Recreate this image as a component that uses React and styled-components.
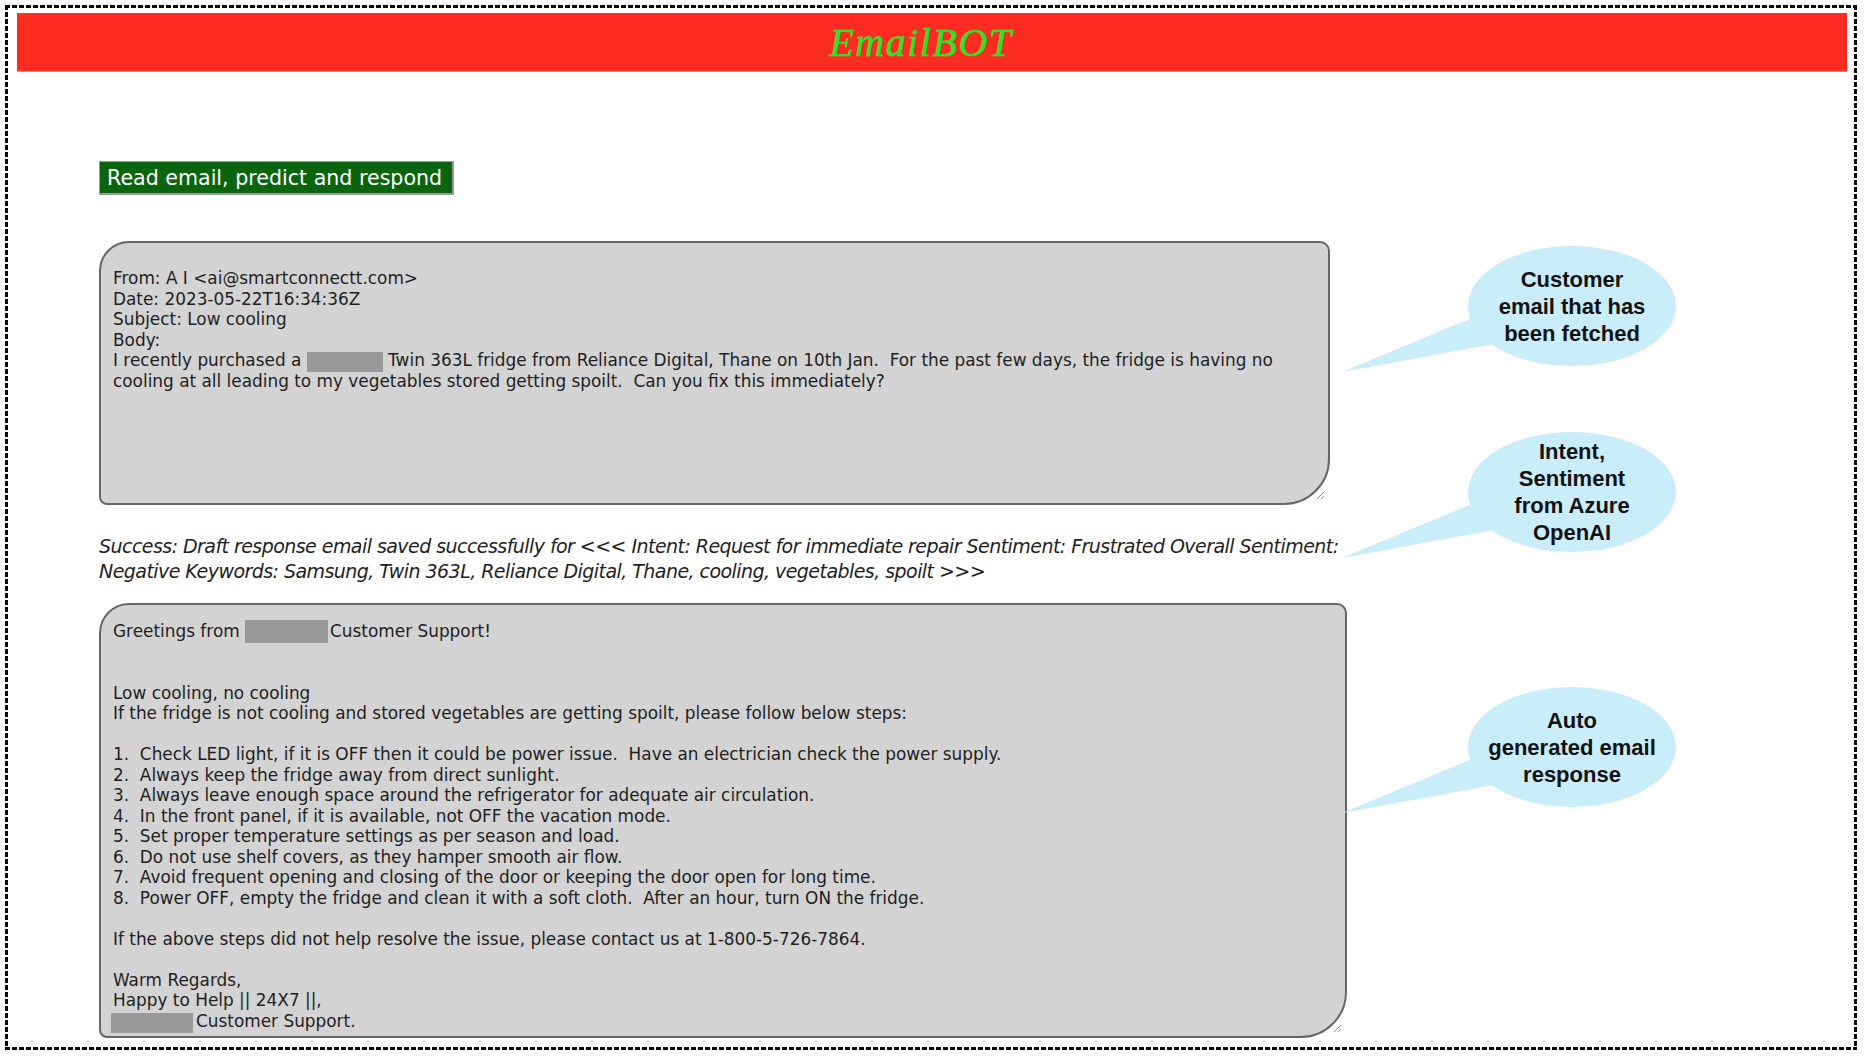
import React from 'react';
import styled, { createGlobalStyle } from 'styled-components';

const GlobalStyle = createGlobalStyle`
  html, body {
    margin: 0;
    padding: 0;
    background: #ffffff;
  }
  body {
    font-family: "DejaVu Sans", Tahoma, sans-serif;
    color: #1e1e1e;
  }
`;

// dashed page frame, drawn with gradients so the dashes stay short
const dash = (dir) => `repeating-linear-gradient(${dir}, #000 0 5px, transparent 5px 7px)`;

const Frame = styled.div`
  margin: 5px;
  width: 1852px;
  height: 1045px;
  box-sizing: border-box;
  padding: 3px;
  background:
    ${dash('90deg')} top left / 100% 3px no-repeat,
    ${dash('90deg')} bottom left / 100% 3px no-repeat,
    ${dash('180deg')} top left / 3px 100% no-repeat,
    ${dash('180deg')} top right / 3px 100% no-repeat;
`;

const Header = styled.header`
  margin: 5px 7px 0 9px;
  height: 58px;
  padding-right: 22px;
  background: #fe2b20;
  border-bottom: 1px solid #ff9089;
  display: flex;
  align-items: center;
  justify-content: center;
`;

const Title = styled.h1`
  margin: 0;
  font-family: "Liberation Serif", serif;
  font-style: italic;
  font-weight: normal;
  font-size: 40px;
  letter-spacing: 1.5px;
  color: #2de22d;
  -webkit-text-stroke: 0.6px #2de22d;
`;

const Main = styled.main`
  padding-left: 91px;
`;

const ActionButton = styled.button`
  display: block;
  margin-top: 89px;
  width: 355px;
  height: 34px;
  box-sizing: border-box;
  padding: 0 0 0 7px;
  text-align: left;
  background: #0b650f;
  color: #ffffff;
  font-family: "DejaVu Sans", Tahoma, sans-serif;
  font-size: 20.6px;
  border: 1px solid #9a9a9a;
  border-right-width: 2px;
  border-bottom-width: 2px;
  cursor: pointer;
`;

const Workspace = styled.div`
  display: flex;
  margin-top: 46px;
`;

const MailColumn = styled.div`
  width: 1248px;
  display: flex;
  flex-direction: column;
  align-items: flex-start;
`;

const MailBox = styled.div`
  position: relative;
  box-sizing: border-box;
  width: ${p => p.$w}px;
  height: ${p => p.$h}px;
  padding: ${p => p.$pt}px 12px 0 12px;
  background: #d3d3d3;
  border: 2px solid #666666;
  border-radius: 30px 10px 46px 8px;
  font-size: 16.9px;
  line-height: 20.5px;
  color: #1e1e1e;
  white-space: pre-wrap;
`;

const Line = styled.div`
  min-height: 20.5px;
`;

const Redacted = styled.span`
  display: inline-block;
  width: ${p => p.$w}px;
  height: ${p => p.$h}px;
  margin: -2px ${p => p.$after || 0}px -6px ${p => p.$before || 0}px;
  background: #9a9a9a;
`;

const ResizeGrip = styled.svg`
  position: absolute;
  right: 3px;
  bottom: 3px;
`;

const StatusText = styled.p`
  margin: 29px 0 20px;
  width: 1248px;
  font-style: italic;
  font-size: 19px;
  letter-spacing: -0.55px;
  line-height: 24.5px;
  color: #1e1e1e;
`;

const CalloutColumn = styled.aside`
  display: flex;
  flex-direction: column;
  margin-left: -5px;
`;

const Callout = styled.div`
  position: relative;
  width: 334px;
  height: 126px;
  margin-top: ${p => p.$mt}px;
  display: flex;
  justify-content: flex-end;
`;

const Bubble = styled.div`
  position: relative;
  z-index: 1;
  width: 208px;
  height: 120px;
  border-radius: 50%;
  background: #c9edfb;
  display: flex;
  align-items: center;
  justify-content: center;
  text-align: center;
  font-family: "Liberation Sans", Arial, sans-serif;
  font-weight: bold;
  font-size: 22px;
  line-height: 27px;
  color: #111111;
`;

const Tail = styled.svg`
  position: absolute;
  left: 0;
  top: 0;
`;

function Grip() {
  return (
    <ResizeGrip width="10" height="10" viewBox="0 0 10 10">
      <path d="M9 2 L2 9 M9 6 L6 9" stroke="#8a8a8a" strokeWidth="1" fill="none" />
    </ResizeGrip>
  );
}

function Note({ mt, children }) {
  return (
    <Callout $mt={mt}>
      <Tail width="160" height="126" viewBox="0 0 160 126">
        <polygon points="0,126 130,72 152,98" fill="#c9edfb" />
      </Tail>
      <Bubble>
        <div>{children}</div>
      </Bubble>
    </Callout>
  );
}

const steps = [
  '1.  Check LED light, if it is OFF then it could be power issue.  Have an electrician check the power supply.',
  '2.  Always keep the fridge away from direct sunlight.',
  '3.  Always leave enough space around the refrigerator for adequate air circulation.',
  '4.  In the front panel, if it is available, not OFF the vacation mode.',
  '5.  Set proper temperature settings as per season and load.',
  '6.  Do not use shelf covers, as they hamper smooth air flow.',
  '7.  Avoid frequent opening and closing of the door or keeping the door open for long time.',
  '8.  Power OFF, empty the fridge and clean it with a soft cloth.  After an hour, turn ON the fridge.',
];

export default function App() {
  return (
    <>
      <GlobalStyle />
      <Frame>
        <Header>
          <Title>EmailBOT</Title>
        </Header>
        <Main>
          <ActionButton>Read email, predict and respond</ActionButton>
          <Workspace>
            <MailColumn>
              <MailBox $w={1231} $h={264} $pt={25}>
                <Line>From: A I &lt;ai@smartconnectt.com&gt;</Line>
                <Line>Date: 2023-05-22T16:34:36Z</Line>
                <Line>Subject: Low cooling</Line>
                <Line>Body:</Line>
                <Line>
                  {'I recently purchased a '}
                  <Redacted $w={76} $h={20} />
                  {' Twin 363L fridge from Reliance Digital, Thane on 10th Jan.  For the past few days, the fridge is having no cooling at all leading to my vegetables stored getting spoilt.  Can you fix this immediately?'}
                </Line>
                <Grip />
              </MailBox>

              <StatusText>
                Success: Draft response email saved successfully for &lt;&lt;&lt; Intent: Request for immediate repair Sentiment: Frustrated Overall Sentiment: Negative Keywords: Samsung, Twin 363L, Reliance Digital, Thane, cooling, vegetables, spoilt &gt;&gt;&gt;
              </StatusText>

              <MailBox $w={1248} $h={435} $pt={16}>
                <Line>
                  {'Greetings from '}
                  <Redacted $w={83} $h={23} $after={2} />
                  {'Customer Support!'}
                </Line>
                <Line />
                <Line />
                <Line>Low cooling, no cooling</Line>
                <Line>If the fridge is not cooling and stored vegetables are getting spoilt, please follow below steps:</Line>
                <Line />
                {steps.map(s => (
                  <Line key={s}>{s}</Line>
                ))}
                <Line />
                <Line>If the above steps did not help resolve the issue, please contact us at 1-800-5-726-7864.</Line>
                <Line />
                <Line>Warm Regards,</Line>
                <Line>Happy to Help || 24X7 ||,</Line>
                <Line>
                  <Redacted $w={82} $h={20} $before={-2} $after={3} />
                  {'Customer Support.'}
                </Line>
                <Grip />
              </MailBox>
            </MailColumn>

            <CalloutColumn>
              <Note mt={5}>
                Customer<br />email that has<br />been fetched
              </Note>
              <Note mt={60}>
                Intent,<br />Sentiment<br />from Azure<br />OpenAI
              </Note>
              <Note mt={129}>
                Auto<br />generated email<br />response
              </Note>
            </CalloutColumn>
          </Workspace>
        </Main>
      </Frame>
    </>
  );
}
